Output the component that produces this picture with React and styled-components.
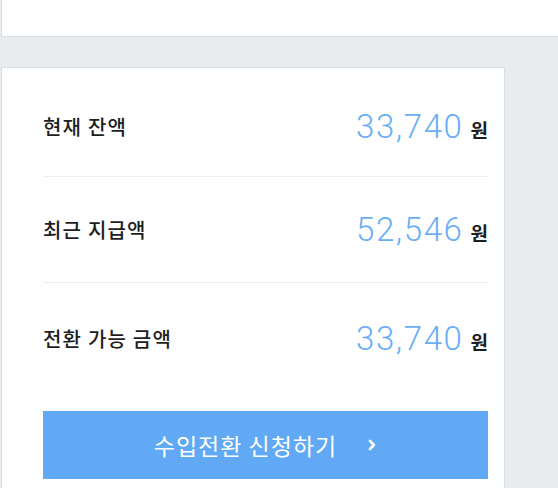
import React from "react";
import styled, { createGlobalStyle } from "styled-components";

const Global = createGlobalStyle`
  html, body { margin: 0; padding: 0; background: #e8ecef; }
  body { font-family: "Noto Sans CJK KR", "Noto Sans", sans-serif; overflow: hidden; }
`;

const Page = styled.div`
  width: 558px;
  height: 488px;
  display: flex;
  flex-direction: column;
  overflow: hidden;
`;

const TopPanel = styled.div`
  height: 36px;
  background: #fff;
  border-left: 1px solid #d9dde0;
  border-bottom: 1px solid #d9dde0;
  margin-left: 1px;
  flex-shrink: 0;
`;

const Card = styled.div`
  margin-top: 30px;
  margin-left: 1px;
  width: 504px;
  flex: 1;
  background: #fff;
  border: 1px solid #d9dde0;
  border-bottom: none;
  padding: 8px 16px 0 41px;
  box-sizing: border-box;
`;

const Row = styled.div`
  display: flex;
  align-items: center;
  justify-content: space-between;
  height: ${(p) => p.h}px;
  border-bottom: ${(p) => (p.last ? "none" : "1px solid #eceef0")};
`;

const Label = styled.span`
  font-size: 20px;
  font-weight: 500;
  color: #1e1e1e;
  letter-spacing: 1.2px;
`;

const Amount = styled.span`
  display: flex;
  align-items: baseline;
  gap: 7px;
`;

const Num = styled.span`
  font-family: "Roboto", "Liberation Sans", sans-serif;
  font-weight: 300;
  font-size: 33px;
  letter-spacing: 1.6px;
  color: #6aaef4;
`;

const Unit = styled.span`
  font-size: 19px;
  font-weight: 700;
  color: #1e1e1e;
`;

const Button = styled.button`
  margin-top: 18px;
  width: 100%;
  height: 68px;
  background: #62a9f5;
  border: none;
  color: #fff;
  font-family: "Noto Sans CJK KR", "Noto Sans", sans-serif;
  font-size: 23px;
  font-weight: 400;
  display: flex;
  align-items: center;
  justify-content: center;
  gap: 30px;
  padding: 0;
  letter-spacing: 1px;
`;

const rows = [
  { label: "현재 잔액", value: "33,740", h: 100 },
  { label: "최근 지급액", value: "52,546", h: 105 },
  { label: "전환 가능 금액", value: "33,740", h: 110, last: true },
];

export default function App() {
  return (
    <>
      <Global />
      <Page>
        <TopPanel />
        <Card>
          {rows.map((r) => (
            <Row key={r.label} h={r.h} last={r.last}>
              <Label>{r.label}</Label>
              <Amount>
                <Num>{r.value}</Num>
                <Unit>원</Unit>
              </Amount>
            </Row>
          ))}
          <Button>
            <span>수입전환 신청하기</span>
            <svg width="10" height="14" viewBox="0 0 10 14">
              <path d="M3 3l4 4-4 4" stroke="#fff" strokeWidth="2.6" fill="none" strokeLinecap="round" strokeLinejoin="round" />
            </svg>
          </Button>
        </Card>
      </Page>
    </>
  );
}
